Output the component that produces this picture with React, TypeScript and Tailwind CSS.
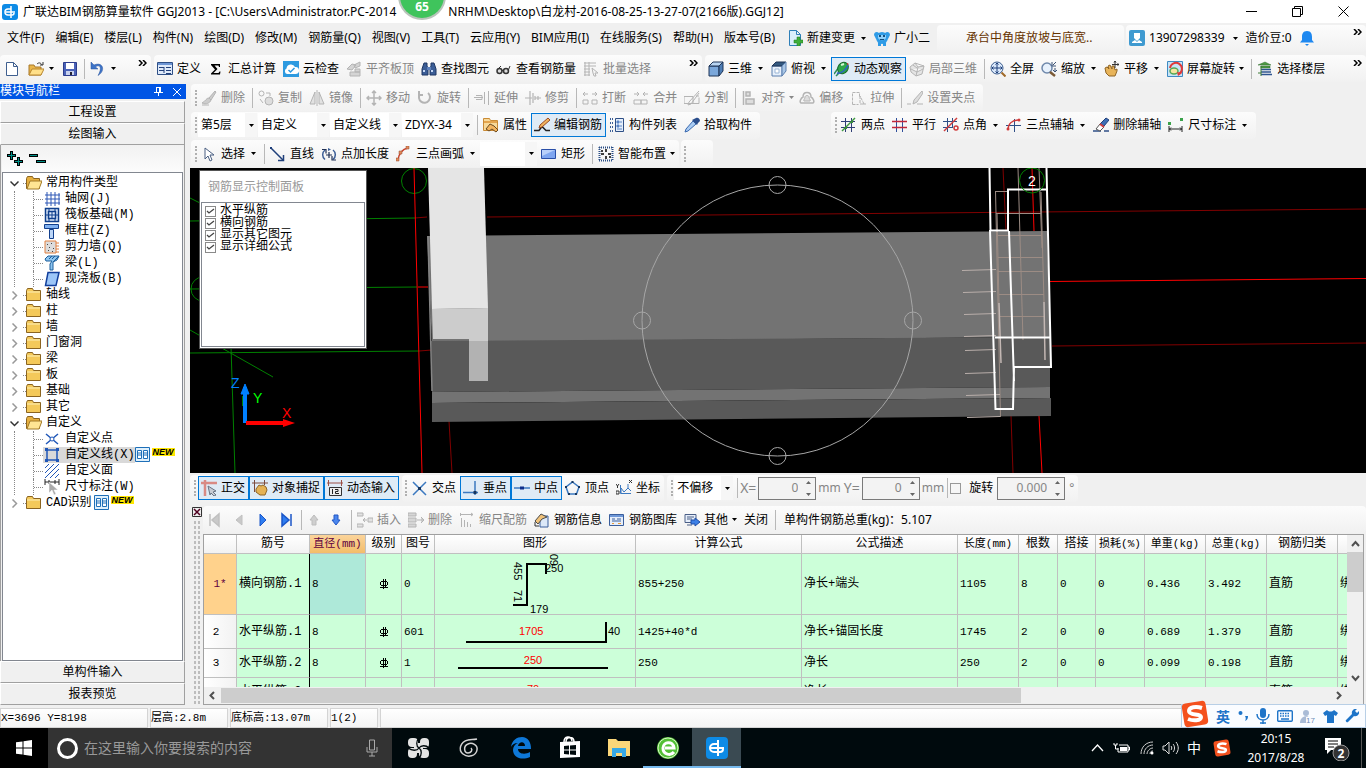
import { useState } from "react";
import type { ReactNode } from "react";

/* ICONS */

const GRAY = "#b4b4b4";

const icons: Record<string, ReactNode> = {
  newFile: <path d="M2.500 1.500h7l4 4v9h-11z M9.500 1.500v4h4" fill="#fff" stroke="#3f5f8f" />,
  open: (
    <>
      <path d="M1 4h5l1 2h6v8H1z" fill="#e9b64a" stroke="#a8782a" />
      <path d="M1 14l3-6h12l-3 6z" fill="#ffe08a" stroke="#b8862f" />
      <path d="M9 3c2-2 4-1 5 1m1-3v3h-3" fill="none" stroke="#333" />
    </>
  ),
  save: (
    <>
      <path d="M1.500 1.500h13v13h-13z" fill="#4a62b8" stroke="#2d3c8c" />
      <path d="M4 2h8v6H4z" fill="#fff" />
      <path d="M4 10h8v4H4z" fill="#c9d2ee" />
      <path d="M8 11h2v3H8z" fill="#223" />
    </>
  ),
  undo: <path d="M1 1v7h7L5.500 6C9 3 13 6 8 14.500 16 10 13 0 4 4z" fill="#3e74c8" stroke="#2a549c" strokeWidth=".5" />,
  define: (
    <>
      <path d="M.500 1.500h15v12H.500z" fill="#dfeafa" stroke="#2e4f86" />
      <path d="M1 2h14v2H1z" fill="#6d95d4" />
      <path d="M2 6.500h5m-5 3h5m2-3h5m-5 3h5m-5 3h5M7 6v6" stroke="#22407a" />
    </>
  ),
  sigma: <path d="M3 3h9v3h-1l-.500-1.500H6.500L9.500 8l-4 4h5l1-1.500h1l-.500 3H3v-1L7 8.500 3 4z" fill="#000" />,
  cloud: (
    <>
      <path d="M0 0h16v16H0z" fill="#2d9ae0" />
      <path d="M4 13a3 3 0 0 1-.500-5.500A4.500 4.500 0 0 1 12 6a3.500 3.500 0 0 1 1 7z" fill="#fff" />
      <path d="M5.500 9l2 2 4-4" fill="none" stroke="#2d9ae0" strokeWidth="1.500" />
    </>
  ),
  slabTop: <path d="M1 8l5-5 4 1-4 5zM8 4l6-3v4l-5 2zM4 11h10v4H4zM9 8h5v3H9z" fill="#d4d4d4" stroke={GRAY} />,
  find: (
    <>
      <path d="M3 2h3v3l1 2v7H1V8zM10 2h3l2 6v6H9V7l1-2z" fill="#3b5d96" stroke="#1e3762" />
      <path d="M6 6h4v3H6z" fill="#5f82bd" />
      <path d="M2 10h2m6 0h2" stroke="#c6d8f5" strokeWidth="2" />
    </>
  ),
  glasses: (
    <>
      <circle cx="3.500" cy="10" r="2.500" fill="#ddd" stroke="#333" strokeWidth="1.500" />
      <circle cx="10" cy="10" r="2.500" fill="#ddd" stroke="#333" strokeWidth="1.500" />
      <path d="M6 9.500h2M2 8l3-3m7 5l2-5" stroke="#333" fill="none" />
    </>
  ),
  batch: (
    <path d="M1 2h12M1 5h12M1 8h6M1 11h6M1 14h6M2 1v14M6 1v14M9 7l6 5h-3l1 3-2 0-1-3z" fill="none" stroke={GRAY} />
  ),
  cube: (
    <>
      <path d="M1 5h10v10H1z" fill="#7aa7da" stroke="#1f3556" />
      <path d="M1 5l4-4h10l-4 4z" fill="#b9d5f2" stroke="#1f3556" />
      <path d="M11 5l4-4v9l-4 5z" fill="#4d7db5" stroke="#1f3556" />
    </>
  ),
  topView: (
    <>
      <path d="M1 5h10v10H1z" fill="#e7f0fb" stroke="#5b7fae" />
      <path d="M1 5l4-4h10l-4 4z" fill="#33587f" stroke="#1f3556" />
      <path d="M11 5l4-4v9l-4 5z" fill="#a9c6e6" stroke="#5b7fae" />
      <path d="M4 8h4v4H4z" fill="#fff" stroke="#9ab5d6" />
    </>
  ),
  orbit: (
    <>
      <path d="M0 13l5-7M2 15l12-12" stroke="#2c8c5c" strokeWidth="1.500" />
      <ellipse cx="9" cy="7" rx="5" ry="6" transform="rotate(35 9 7)" fill="#2fa84b" stroke="#18692c" />
      <path d="M3 12c4 1 9-3 11-8" fill="none" stroke="#2c62c4" strokeWidth="1.500" />
      <path d="M7 4l3-1" stroke="#d6f6d6" strokeWidth="2" />
      <path d="M13 2l2 1-2 1z" fill="#e03030" />
    </>
  ),
  partial3d: <path d="M1 6l5-4 9 3-2 8-6 2-5-4zM6 2l3 4 6-1M9 6l-2 9M2 8l6 3 6-3M4 4l4 3" fill="#e4e4e4" stroke={GRAY} />,
  fullscreen: (
    <>
      <circle cx="7" cy="7" r="6" fill="#dbe9fb" stroke="#3a5b8c" />
      <path d="M7 2v10M2 7h10M5.500 3.500L7 2l1.500 1.500M5.500 10.500L7 12l1.500-1.500M3.500 5.500L2 7l1.500 1.500M10.500 5.500L12 7l-1.500 1.500" fill="none" stroke="#1d3f7a" />
      <path d="M11.500 11.500l4 4" stroke="#a06a2a" strokeWidth="2" />
    </>
  ),
  zoom: (
    <>
      <circle cx="6" cy="7" r="5" fill="#e7f1fc" stroke="#6f88ab" strokeWidth="1.500" />
      <path d="M9 11l5 4" stroke="#7b5a36" strokeWidth="2.500" />
      <path d="M11 1v4h4M12 4l3-3M14 7v4M12 9l2 2 2-2" fill="none" stroke="#3c5375" />
    </>
  ),
  pan: (
    <>
      <path d="M1 7l2-1 2 2-1-3 2-1 2 4V5l2 0 1 4 2-1 0 2-2 5H5L2 12z" fill="#e8b45a" stroke="#8f6526" />
      <path d="M11 0v7M8 3.500h7M10 1.500L11 0l1 1.500M13.500 2.500l1.500 1-1.500 1" fill="none" stroke="#333" />
    </>
  ),
  rotateScreen: (
    <>
      <path d="M.500.500h15v15H.500z" fill="#c6e4f7" stroke="#3f8ac2" />
      <path d="M3 7a6 6 0 1 1 9 6" fill="none" stroke="#e03a3a" strokeWidth="2" />
      <ellipse cx="7" cy="10" rx="4" ry="3" fill="#f6e6a0" stroke="#57a857" strokeWidth="1.500" />
      <path d="M10 11l5 1-4 3z" fill="#e03a3a" />
    </>
  ),
  floors: (
    <>
      <path d="M1 4l7-3 6 3zM4 5h9v2H4z" fill="#4f9a45" stroke="#2f6a2a" strokeWidth=".5" />
      <path d="M4 8.500h10M4 11h10M4 13.500h11" stroke="#2f5591" strokeWidth="1.500" />
      <path d="M4 5v10M1 12h3" stroke="#3e7d39" />
    </>
  ),
  brush: <path d="M14 1L8 8l2 2 5-8zM8 8c-3 0-3 3-7 5 4 2 8 0 9-3zM1 15h7" fill="#ccc" stroke={GRAY} />,
  copy: (
    <>
      <circle cx="3.500" cy="3.500" r="2.500" fill="none" stroke={GRAY} />
      <circle cx="11" cy="11" r="4" fill="#ddd" stroke={GRAY} />
      <path d="M8 3h4v3M2 9l3 4" fill="none" stroke={GRAY} />
    </>
  ),
  mirror: <path d="M6 2v12H1zM10 2v12h5zM8 0v16" fill="#e2e2e2" stroke={GRAY} />,
  move: <path d="M8 1v14M1 8h14M6 3l2-2 2 2M6 13l2 2 2-2M3 6L1 8l2 2M13 6l2 2-2 2" fill="none" stroke={GRAY} strokeWidth="1.500" />,
  rotate: <path d="M3 4a5.500 5.500 0 1 0 8-1M2 1v4h4" fill="none" stroke={GRAY} strokeWidth="2" />,
  extend: <path d="M0 7.500h9M2 5.500h6v4H2M10.500 2v12M14.500 1v14" fill="none" stroke={GRAY} />,
  trim: <path d="M0 8h7M5 1v14M8 3v10M10 8h6M10 6v4M13 6v4" fill="none" stroke={GRAY} strokeWidth="1.200" />,
  breakUp: <path d="M1 4h5M3 2L1 4l2 2M10 4h5M13 2l2 2-2 2M1 10h5v4H1zM10 10h5v4h-5z" fill="none" stroke={GRAY} />,
  merge: <path d="M1 4h5M4 2l2 2-2 2M10 4h5M12 2l-2 2 2 2M1 10h7v4H1zM8 10h6v4H8z" fill="none" stroke={GRAY} />,
  split: <path d="M0 6.500h9v7H0zM9 13.500h6v-6M15 1L5 12l-1 3 3-1 8-11M12 6h3" fill="none" stroke={GRAY} />,
  align: <path d="M2.500 1v14M5 2h4v4H5zM5 9h8v5H5z" fill="#ddd" stroke={GRAY} strokeWidth="1.500" />,
  offset: (
    <>
      <path d="M2 13c-2-1 0-5 2-6 0-6 8-6 8 0 2 1 4 5 2 6z" fill="none" stroke={GRAY} strokeWidth="1.500" />
      <path d="M5 11c-1-1 1-2 1-4s4-2 4 0 2 3 1 4z" fill="#ddd" stroke={GRAY} />
    </>
  ),
  stretch: <path d="M2.500 14.500v-12h7v4M2.500 14.500h6M10 6v8h4l-4-8M13 14h3" fill="none" stroke={GRAY} strokeDasharray="3 1" />,
  setGrip: <path d="M0 14h4m6 0h6M15 1L7 10l-1 4 4-2 6-9z" fill="#ddd" stroke={GRAY} />,
  props: (
    <>
      <path d="M.500 1.500h6l1 2h7v10H.500z" fill="#f7d99a" stroke="#c98a35" />
      <path d="M1 4h13v2H1z" fill="#e3a44e" />
      <path d="M3 12l4-5 4 2 4 4-2 2-4-3-3 2z" fill="#f3b45e" stroke="#6c4a1e" />
    </>
  ),
  editBar: (
    <>
      <path d="M0 13.500h5l3-4 4 4h4" fill="none" stroke="#222" strokeWidth="1.500" />
      <path d="M14 1l2 2-8 7-3 1 1-3z" fill="#f0b35e" stroke="#9b4a22" />
    </>
  ),
  list: (
    <>
      <path d="M1 2h4M1 6h3M1 10h3M1 14h4" stroke="#3c5f98" strokeDasharray="1 1" strokeWidth="2" />
      <path d="M6.500 1.500h8v13h-8z" fill="#e3edfa" stroke="#2e4f86" />
      <path d="M8 4h2v2H8zm0 4h2v2H8zM11 5h2m-2 4h2m-5 3h5" stroke="#5b84c4" fill="#5b84c4" />
    </>
  ),
  pick: (
    <>
      <path d="M9 4l3 3-8 7-3 1 1-3z" fill="#a9cbf2" stroke="#3b6ab0" />
      <path d="M8 3l5 5 1-2 2-2c0-2-2-4-4-3l-2 1z" fill="#2a4d8c" />
    </>
  ),
  twoPoint: (
    <>
      <path d="M0 4.500h14M0 10.500h14M4.500 1v14M10.500 1v14" stroke="#2f3f76" />
      <path d="M1 14L14 1" stroke="#3f9a3f" strokeWidth="1.500" />
      <path d="M3 10h3v2H3zM10 4h2v2h-2z" fill="#3a8a3a" />
    </>
  ),
  parallel: (
    <>
      <path d="M4.500 1v14M10.500 1v14" stroke="#2f4f9b" />
      <path d="M0 4.500h15M0 10.500h15" stroke="#c2273a" strokeWidth="1.500" />
    </>
  ),
  angle: (
    <>
      <path d="M0 4.500h14M0 10.500h10M4.500 1v14M9.500 1v10" stroke="#2f4f86" />
      <path d="M1 14L14 1" stroke="#d03a3a" strokeWidth="1.500" />
      <circle cx="13" cy="11" r="2" fill="none" stroke="#d03a3a" strokeWidth="1.500" />
    </>
  ),
  threeAxis: (
    <>
      <path d="M0 8.500h15M8.500 2v13" fill="none" stroke="#2f4f86" />
      <path d="M2 13C2 7 6 3 13 3" fill="none" stroke="#d03a3a" strokeWidth="1.500" />
      <circle cx="13" cy="3" r="1.500" fill="#d03a3a" />
      <circle cx="2" cy="12" r="1.500" fill="#d03a3a" />
    </>
  ),
  delAxis: (
    <>
      <path d="M0 14h8m3 0h5" stroke="#2f4f86" strokeWidth="1.500" />
      <path d="M13 1l3 2-5 6-4-2z" fill="#3f6fb5" stroke="#22407a" />
      <path d="M7 7l4 3-4 4-4-2z" fill="#fff" stroke="#555" />
      <path d="M7 7l4 3" stroke="#d04040" strokeWidth="2" />
    </>
  ),
  dim: (
    <>
      <path d="M1 12h13M1 9v6M14 9v6M3 10.500L1.500 12 3 13.500M12 10.500l1.500 1.500-1.500 1.500" fill="none" stroke="#222" />
      <path d="M0 5h3v3H0zM12 1h3v3h-3z" fill="#3aa24a" />
    </>
  ),
  cursor: <path d="M4 2v11l3-3 2 5 2-1-2-5h4z" fill="#fff" stroke="#4a5f82" />,
  line: (
    <>
      <path d="M1 2l12 12" stroke="#1f3f7a" strokeWidth="1.500" />
      <path d="M13.500 9v5.500H8" fill="none" stroke="#1f3f7a" strokeWidth="1.500" />
      <path d="M0 1h2v2H0z" fill="#1f3f7a" />
    </>
  ),
  pointLen: (
    <>
      <path d="M4 13.500A6 6 0 0 1 4 4M12 4a6 6 0 0 1 0 9.500" fill="none" stroke="#3b5d96" strokeWidth="1.500" />
      <path d="M8 6v6M5 9h6M1 3.500h4v4M15 14H11v-4" fill="none" stroke="#1e2f55" strokeWidth="1.200" />
      <path d="M7 2l3 1.500L7 5z" fill="#3b5d96" />
    </>
  ),
  arc: (
    <>
      <path d="M2 14C3 7 7 3 12 2" fill="none" stroke="#c8412c" strokeWidth="1.500" />
      <path d="M0 12h3v3H0zM3 5h3v3H3zM10 0h3v3h-3z" fill="#e58a5a" stroke="#8c4a30" strokeWidth=".5" />
    </>
  ),
  rect: (
    <>
      <path d="M.500 3.500h14v9H.500z" fill="#7fa6f0" stroke="#2a4fa8" />
      <path d="M1 4h13L1 10z" fill="#b9d0fa" />
    </>
  ),
  smart: (
    <>
      <path d="M1 1.500h14M1 14.500h14M1.500 1v14M14.500 1v14" fill="none" stroke="#2b4f86" strokeWidth="2" strokeDasharray="1 1" />
      <path d="M8 3v3M8 10v3M3 8h3M10 8h3M4 4v2M12 10v2" stroke="#000" strokeWidth="1.500" />
    </>
  ),
  ortho: (
    <>
      <path d="M0 3h16M4 0v16" stroke="#d98a84" strokeWidth="2.500" />
      <path d="M7 6l8 5-3 1 3 3-2 1-3-3-1 2z" fill="#c8ccd4" stroke="#6a7484" />
    </>
  ),
  snap: (
    <>
      <path d="M0 3h16M2.500 0v12M12.500 0v5" stroke="#7c4b3c" />
      <path d="M4 9l3-4 2 1 2-1 3 2 1 3-2 5H8l-4-3z" fill="#e5b254" stroke="#8f6526" />
    </>
  ),
  dynInput: (
    <>
      <path d="M0 3h16M1.500 0v6M14.500 0v6" stroke="#9c5148" />
      <path d="M2.500 7.500h12v8h-12z" fill="#eee" stroke="#333" />
      <path d="M5.500 9v5M8 9.500h3v2H8.500v2H12" fill="none" stroke="#222" />
    </>
  ),
  cross: (
    <>
      <path d="M1 2l13 13M14 2L1 15" stroke="#3c79c0" strokeWidth="1.500" />
      <path d="M6 7h3v3H6z" fill="#16365f" />
    </>
  ),
  perp: (
    <>
      <path d="M0 12.500h15M12 1v14" stroke="#3c79c0" strokeWidth="1.500" />
      <path d="M10.500 11h3v3h-3z" fill="#16365f" />
    </>
  ),
  middle: (
    <>
      <path d="M0 8h16" stroke="#3c79c0" strokeWidth="1.500" />
      <path d="M6 6.500h4v3H6z" fill="#0f2f8c" />
    </>
  ),
  vertex: (
    <>
      <path d="M7.500 2L14 7l-2.500 7h-8L1 7z" fill="none" stroke="#3c79c0" strokeWidth="1.500" />
      <path d="M6.500 1h2v2h-2zM0 6h2v2H0zM13 6h2v2h-2zM3 13h2v2H3zM10 13h2v2h-2z" fill="#16365f" />
    </>
  ),
  coord: (
    <>
      <path d="M4.500 5v8.500H15M5 13V8l3 4 4-4V4M12 8l3 3" fill="none" stroke="#3c79c0" />
      <path d="M0 4l1.500 2L3 4M1.500 6v2M13 0l3 3m0-3l-3 3M0 11h3v3H0z" fill="none" stroke="#333" />
    </>
  ),
  first: <path d="M3 2v12M12 2v12L5 8z" fill="#c9c9c9" stroke="#c0c0c0" strokeWidth="1.500" />,
  prev: <path d="M11 3v10L5 8z" fill="#c9c9c9" stroke="#c0c0c0" />,
  next: <path d="M5 2v12l6-6z" fill="#2f7df0" stroke="#1b56c8" />,
  last: <path d="M3 2v12l7-6zM12 2v12" fill="#2f7df0" stroke="#1b56c8" strokeWidth="1.500" />,
  up: <path d="M7 3l4 5H9v5H5V8H3z" fill="#cfcfcf" stroke="#bdbdbd" />,
  down: <path d="M7 13l4-5H9V3H5v5H3z" fill="#4a86ee" stroke="#2257c4" />,
  insertRow: <path d="M0 1h6v3H0zM0 12h6v3H0zM6 8h4M8 6L6 8l2 2M11 6h5v4h-5z" fill="#e2e2e2" stroke={GRAY} />,
  deleteRow: <path d="M0 1h8v3H0zM0 6h8v4H0zM0 12h8v3H0zM9 8h7M13 5l3 3-3 3" fill="#d6d6d6" stroke={GRAY} />,
  scaleBar: <path d="M1 2.500h13M1.500 1v3M12 1l2 1.500L12 4M2.500 6v9M5.500 8v7M8.500 10v5M11.500 12v3" fill="none" stroke={GRAY} />,
  barInfo: (
    <>
      <path d="M6 4h8v11H6z" fill="#dce8f8" stroke="#3a5e9c" />
      <path d="M1 9l6-7 6 3-5 2-4 5z" fill="#f0c27a" stroke="#4b4b4b" />
      <path d="M1 10v4h4" fill="none" stroke="#333" />
    </>
  ),
  barLib: (
    <>
      <path d="M.500 2.500h14v11H.500z" fill="#e6eefa" stroke="#3a5e9c" />
      <path d="M1 3h13v2H1z" fill="#6f98d8" />
      <path d="M3 7h3m2 0h4M3 9h9" stroke="#3a5e9c" />
      <path d="M3 11h2v1H3zM9 11h3v1H9z" fill="#e89a3a" />
    </>
  ),
  other: (
    <>
      <path d="M1 2.500h11v8H1z" fill="#e6eefa" stroke="#4a5e86" />
      <path d="M3 5h7M3 7h5M3 13h5" stroke="#4a5e86" />
      <path d="M7 8h4V6l5 4-5 4v-2H7z" fill="#3c7fe6" stroke="#1e4fa8" />
    </>
  ),
  newChange: (
    <>
      <path d="M2.500.500h7l4 4v11h-11zM9.500.500v4h4" fill="#d9eefb" stroke="#2e7fb8" />
      <path d="M10 7h3v3h3v3h-3v3h-3v-3H7v-3h3z" fill="#3fae3a" stroke="#1f7a1f" strokeWidth=".5" />
    </>
  ),
  robot: (
    <>
      <circle cx="8" cy="8" r="6" fill="#2f9be6" />
      <path d="M0 5c0-3 3-4 5-2h6c2-2 5-1 5 2l-2 4H2zM4 13h3v3H4zM9 13h3v3H9z" fill="#2f9be6" />
      <path d="M4 5h8v3c-2 3-6 3-8 0z" fill="#8fd0fa" />
      <path d="M5 5h2v2H5zM9 5h2v2H9zM6 9h4v1H6z" fill="#14507f" />
    </>
  ),
  user: (
    <>
      <rect width="16" height="16" rx="2" fill="#3f9ad0" />
      <path d="M5 3h6v5l-3 3-3-3zM3 12l3-2 2 2 2-2 3 2v1H3z" fill="#fff" />
    </>
  ),
  grid: <path d="M3 1v14M7 1v14M11 1v14M1 4h12M1 8h12M1 12h12M14 3h2v2h-2zM14 7h2v2h-2zM14 11h2v2h-2z" fill="none" stroke="#2c57b5" />,
  raft: (
    <>
      <path d="M1.500 1.500h13v13h-13zM4.500 4.500h7v7h-7z" fill="#dce8fa" stroke="#0f3f8c" strokeWidth="1.500" />
      <path d="M8 5v6M5 8h6M5 1v3M11 1v3M5 12v3M11 12v3M1 8h3M12 8h3" stroke="#0f3f8c" />
    </>
  ),
  column: (
    <>
      <path d="M.500 1.500h14v4h-14z" fill="#7fb0f0" stroke="#123f8c" />
      <path d="M5.500 6.500h4v9h-4z" fill="#bcd6f8" stroke="#123f8c" />
    </>
  ),
  wall: (
    <>
      <path d="M1 2h11v12H1z" fill="#dcdcdc" stroke="#e08040" />
      <path d="M3 5h1v1H3zM7 4h1v1H7zM5 8h1v1H5zM9 9h1v1H9zM4 11h1v1H4zM8 12h1v1H8z" fill="#444" />
      <path d="M12 4h3M12 7h3M12 10h3M12 13h3" stroke="#e08040" />
    </>
  ),
  beam: (
    <>
      <path d="M1 4l3-3h11l-2 4-4 2v8H6V9l2-3H2z" fill="#8ec5f0" stroke="#1c5f9c" />
      <path d="M9 7l6-6M8 4l3-3M5 4l3-3" fill="none" stroke="#1c5f9c" />
    </>
  ),
  slab: <path d="M4 1.500h11l-3 13H1.500z" fill="#9cc6f8" stroke="#123f9c" strokeWidth="1.500" />,
  customPoint: (
    <>
      <path d="M2 3l12 10M14 3L2 13" stroke="#2057b8" strokeWidth="1.500" />
      <circle cx="8" cy="8" r="2" fill="#fff" stroke="#2057b8" />
    </>
  ),
  customLine: (
    <>
      <path d="M3 3h10v10H3z" fill="none" stroke="#2057b8" strokeWidth="1.500" />
      <path d="M1 1h3v3H1zM12 1h3v3h-3zM1 12h3v3H1zM12 12h3v3h-3z" fill="#2057b8" />
    </>
  ),
  customFace: <path d="M1 5l4-4M1 10l9-9M1 15L15 1M6 15l9-9M11 15l4-4" stroke="#2057b8" />,
  dimMark: (
    <>
      <path d="M1 3h14M1 0v6M15 0v6M5 1v4M11 1v4" stroke="#222" />
      <path d="M5 3v11l3-3 2 5 2-1-2-4h4z" fill="#aaa" stroke="#fff" strokeWidth=".5" />
    </>
  ),
  folder: (
    <>
      <path d="M.500 3.500l1-2h5l1 2h7v10h-14z" fill="#f4c95a" stroke="#8b6420" />
      <path d="M1 5h13" stroke="#fdf0b8" />
    </>
  ),
  folderOpen: (
    <>
      <path d="M.500 3.500l1-2h5l1 2h6v10h-13z" fill="#e6b040" stroke="#8b6420" />
      <path d="M1 14l3-8h12l-3 8z" fill="#ffe593" stroke="#a27a28" />
    </>
  ),
  book: (
    <>
      <path d="M.500.500h14v14H.500z" fill="#dff0fc" stroke="#1e6fb8" />
      <path d="M2.500 3.500h4v8h-4zM8.500 3.500h4v8h-4z" fill="#fff" stroke="#1e6fb8" />
      <path d="M3 6h3M3 8h3M9 6h3M9 8h3" stroke="#1e6fb8" />
    </>
  ),
};

function Icon({ name, size = 16 }: { name: string; size?: number }) {
  return (
    <svg width={size} height={size} viewBox="0 0 16 16" className="shrink-0" aria-hidden="true">
      {icons[name]}
    </svg>
  );
}

/* TOOLBAR PARTS */

function Caret({ muted }: { muted?: boolean }) {
  return (
    <svg width="5" height="3" viewBox="0 0 5 3" className="shrink-0" aria-hidden="true">
      <path d="M0 0h5L2.500 3z" fill={muted ? "#888" : "#000"} />
    </svg>
  );
}

type ToolProps = {
  icon?: string;
  label?: string;
  title?: string;
  active?: boolean;
  disabled?: boolean;
  drop?: boolean;
};

function Tool({ icon, label, title, active, disabled, drop }: ToolProps) {
  return (
    <>
      <button
        type="button"
        aria-label={label ?? title}
        disabled={disabled}
        className={`flex h-6 shrink-0 items-center gap-1 border pl-[2px] whitespace-nowrap ${label ? "pr-[3px]" : "pr-[2px]"} ${
          active ? "border-[#0078d7] bg-[#dfebf6]" : "border-transparent"
        } ${disabled ? "text-[#868686]" : "text-black"}`}
      >
        {icon && <Icon name={icon} />}
        {label && <span>{label}</span>}
      </button>
      {drop && (
        <span className="flex w-3 shrink-0 pl-[2px]">
          <Caret muted={disabled} />
        </span>
      )}
    </>
  );
}

function Sep() {
  return <span className="mr-[2px] ml-[3px] h-5 w-px shrink-0 bg-[#b8b8b8]" />;
}

function Grip() {
  return <span className="mr-px h-4 w-[2px] shrink-0 border-l-2 border-dotted border-[#b0b0b0]" />;
}

function Group({ children, className = "" }: { children: ReactNode; className?: string }) {
  return (
    <div className={`flex h-[27px] items-center rounded-sm bg-linear-to-b from-[#fcfcfc] to-[#f1f1f1] ${className}`}>
      {children}
    </div>
  );
}

function More() {
  return (
    <button type="button" aria-label="更多" className="mb-3 ml-auto flex shrink-0 px-1">
      <svg width="9" height="6" viewBox="0 0 9 6">
        <path d="M1 0l3 3-3 3M5 0l3 3-3 3" fill="none" stroke="#000" strokeWidth="1.500" />
      </svg>
    </button>
  );
}

function Combo({ label, value, width }: { label: string; value: string; width: string }) {
  return (
    <div className={`relative mr-px flex h-6 shrink-0 items-center bg-white ${width}`}>
      <select aria-label={label} defaultValue={value} className="h-6 w-full appearance-none bg-transparent pl-[3px] outline-none">
        <option>{value}</option>
      </select>
      <span className="pointer-events-none absolute inset-y-0 right-0 flex w-3 items-center justify-center bg-[#f6f6f6]">
        <Caret />
      </span>
    </div>
  );
}

function Spin({ label, value, width }: { label: string; value: string; width: string }) {
  return (
    <span className={`flex h-[23px] shrink-0 items-center border border-[#7a7a7a] bg-[#f3f3f3] ${width}`}>
      <input
        aria-label={label}
        defaultValue={value}
        className="w-full min-w-0 flex-1 bg-transparent pr-2 text-right text-[#868686] outline-none"
      />
      <svg width="5" height="15" viewBox="0 0 5 15" className="mr-1 shrink-0">
        <path d="M0 3h5L2.500 0zM0 12h5l-2.500 3z" fill="#666" />
      </svg>
    </span>
  );
}

/* TITLE AND MENUS */

const menus = [
  "文件(F)", "编辑(E)", "楼层(L)", "构件(N)", "绘图(D)", "修改(M)", "钢筋量(Q)",
  "视图(V)", "工具(T)", "云应用(Y)", "BIM应用(I)", "在线服务(S)", "帮助(H)", "版本号(B)",
];

function TitleBar() {
  return (
    <header className="flex h-[23px] items-center bg-white pl-[2px]">
      <svg width="16" height="16" viewBox="0 0 16 16" aria-hidden="true">
        <rect width="16" height="16" rx="3" fill="#0d8be6" />
        <path d="M9 2v12M9 5H6a3 3 0 0 0 0 6h4a2 2 0 0 0 2-2M4 8h9" fill="none" stroke="#fff" strokeWidth="1.500" />
      </svg>
      <h1 className="ml-[5px] flex items-center whitespace-nowrap">
        <span>广联达BIM钢筋算量软件 GGJ2013 - [C:\Users\Administrator.PC-2014</span>
        <svg width="48" height="23" viewBox="0 0 48 23" className="mx-[2px] shrink-0">
          <circle cx="24" cy="-4" r="24" fill="#b9c4bb" />
          <circle cx="24" cy="-4" r="22" fill="#3fc45c" />
          <text x="24" y="11" fontSize="12" fontWeight="700" fill="#fff" textAnchor="middle">65</text>
        </svg>
        <span>NRHM\Desktop\白龙村-2016-08-25-13-27-07(2166版).GGJ12]</span>
      </h1>
      <div className="ml-auto flex h-full items-center">
        <button type="button" aria-label="最小化" className="flex w-[46px] justify-center">
          <svg width="11" height="11"><path d="M0 5.500h11" stroke="#000" /></svg>
        </button>
        <button type="button" aria-label="还原" className="flex w-[46px] justify-center">
          <svg width="11" height="11"><path d="M.500 2.500h8v8h-8zM2.500 2.500v-2h8v8h-2" fill="none" stroke="#000" /></svg>
        </button>
        <button type="button" aria-label="关闭" className="flex w-[46px] justify-center">
          <svg width="11" height="11"><path d="M.500.500l10 10M10.500.500l-10 10" stroke="#000" /></svg>
        </button>
      </div>
    </header>
  );
}

function MenuBar() {
  return (
    <nav className="flex h-[30px] items-center pl-[2px]">
      <div className="flex shrink-0 gap-px pr-1">
        {menus.map((m) => (
          <button key={m} type="button" className="shrink-0 px-[5px] whitespace-nowrap">
            {m}
          </button>
        ))}
      </div>
      <Tool icon="newChange" label="新建变更" drop />
      <Tool icon="robot" label="广小二" />
      <Group className="ml-[3px] w-[187px] shrink-0 pl-[29px] text-[#663300]">承台中角度放坡与底宽..</Group>
      <Group className="ml-[2px] flex-1">
        <Tool icon="user" label="13907298339" />
        <span className="mr-2 ml-1"><Caret /></span>
        <span className="whitespace-nowrap">造价豆:0</span>
        <svg width="14" height="15" viewBox="0 0 14 15" className="ml-2 shrink-0">
          <path d="M7 0c4 0 5 3 5 6v3l2 2.500H0L2 9V6c0-3 1-6 5-6zM5 13h4l-2 2z" fill="#1e88f0" />
        </svg>
        <More />
      </Group>
    </nav>
  );
}

function MainToolbar() {
  return (
    <div className="flex h-[31px] items-center">
      <Group className="w-[151px] shrink-0 pl-px">
        <Tool icon="newFile" title="新建" />
        <span className="w-[2px]" />
        <Tool icon="open" title="打开" drop />
        <Tool icon="save" title="保存" />
        <Sep />
        <Tool icon="undo" title="撤销" drop />
        <More />
      </Group>
      <Group className="ml-[3px] w-[548px] shrink-0">
        <Tool icon="define" label="定义" />
        <Tool icon="sigma" label="汇总计算" />
        <Tool icon="cloud" label="云检查" />
        <Tool icon="slabTop" label="平齐板顶" disabled />
        <Tool icon="find" label="查找图元" />
        <Tool icon="glasses" label="查看钢筋量" />
        <Tool icon="batch" label="批量选择" disabled />
        <More />
      </Group>
      <Group className="ml-[3px] flex-1">
        <Tool icon="cube" label="三维" drop />
        <Tool icon="topView" label="俯视" drop />
        <Tool icon="orbit" label="动态观察" active />
        <Tool icon="partial3d" label="局部三维" disabled />
        <Sep />
        <Tool icon="fullscreen" label="全屏" />
        <Tool icon="zoom" label="缩放" drop />
        <Tool icon="pan" label="平移" drop />
        <Tool icon="rotateScreen" label="屏幕旋转" />
        <Caret />
        <span className="w-1" />
        <Sep />
        <Tool icon="floors" label="选择楼层" />
        <More />
      </Group>
    </div>
  );
}

/* LEFT NAVIGATION */

type Leaf = { icon: string; label: string; selected?: boolean; isNew?: boolean };
type Branch = { label: string; children?: Leaf[]; isNew?: boolean };

const tree: Branch[] = [
  {
    label: "常用构件类型",
    children: [
      { icon: "grid", label: "轴网(J)" },
      { icon: "raft", label: "筏板基础(M)" },
      { icon: "column", label: "框柱(Z)" },
      { icon: "wall", label: "剪力墙(Q)" },
      { icon: "beam", label: "梁(L)" },
      { icon: "slab", label: "现浇板(B)" },
    ],
  },
  { label: "轴线" },
  { label: "柱" },
  { label: "墙" },
  { label: "门窗洞" },
  { label: "梁" },
  { label: "板" },
  { label: "基础" },
  { label: "其它" },
  {
    label: "自定义",
    children: [
      { icon: "customPoint", label: "自定义点" },
      { icon: "customLine", label: "自定义线(X)", selected: true, isNew: true },
      { icon: "customFace", label: "自定义面" },
      { icon: "dimMark", label: "尺寸标注(W)" },
    ],
  },
  { label: "CAD识别", isNew: true },
];

function NewMark() {
  return (
    <>
      <Icon name="book" />
      <span className="mb-[6px] ml-px bg-[#ffe600] px-px font-['Liberation_Sans',sans-serif] text-[9px] leading-[8px] font-bold text-black italic">
        NEW
      </span>
    </>
  );
}

function TreeNode({ node }: { node: Branch }) {
  const [open, setOpen] = useState(Boolean(node.children));

  return (
    <li>
      <button type="button" onClick={() => setOpen(!open)} className="flex h-4 items-center whitespace-nowrap">
        <svg width="9" height="9" viewBox="0 0 9 9" className="ml-[7px]">
          <path d={open ? "M.500 2.500l4 4 4-4" : "M2.500.500l4 4-4 4"} fill="none" stroke={open ? "#333" : "#999"} strokeWidth="1.500" />
        </svg>
        <span className="ml-1 w-[3px] border-t border-dotted border-[#888]" />
        <Icon name={open ? "folderOpen" : "folder"} />
        <span className="mr-[2px] ml-1">{node.label}</span>
        {node.isNew && <NewMark />}
      </button>
      {open && node.children && (
        <ul className="ml-[11px] border-l border-dotted border-[#888] pl-[18px]">
          {node.children.map((leaf) => (
            <li key={leaf.label} className="flex h-4 items-center border-l border-dotted border-[#888]">
              <span className="w-[9px] shrink-0 border-t border-dotted border-[#888]" />
              <button
                type="button"
                className={`flex h-4 items-center gap-[5px] pl-px whitespace-nowrap ${leaf.selected ? "bg-[#d9d9d9]" : ""}`}
              >
                <Icon name={leaf.icon} />
                <span>{leaf.label}</span>
              </button>
              {leaf.isNew && <NewMark />}
            </li>
          ))}
        </ul>
      )}
    </li>
  );
}

function NavButton({ label }: { label: string }) {
  return (
    <button
      type="button"
      className="flex h-[22px] w-full items-center justify-center border border-t-white border-r-[#a0a0a0] border-b-[#a0a0a0] border-l-white bg-[#f0f0f0] pt-[2px]"
    >
      {label}
    </button>
  );
}

function Sidebar() {
  return (
    <aside className="flex w-[186px] shrink-0 flex-col font-['Liberation_Mono','Noto_Sans_CJK_SC',monospace]">
      <div className="flex h-[15px] items-center bg-[#0055e5] text-white">
        <h2>模块导航栏</h2>
        <button type="button" aria-label="固定" className="ml-auto">
          <svg width="9" height="9" viewBox="0 0 9 9">
            <path d="M2.500 0v5M6.500 0v5M2 .500h5M0 5.500h9M4.500 5v4M5.500 0v5" fill="none" stroke="#fff" />
          </svg>
        </button>
        <button type="button" aria-label="关闭导航栏" className="mr-[5px] ml-[10px]">
          <svg width="8" height="8" viewBox="0 0 8 8"><path d="M0 0l8 8M8 0L0 8" stroke="#fff" /></svg>
        </button>
      </div>
      <div className="mt-[2px] mr-px">
        <NavButton label="工程设置" />
        <NavButton label="绘图输入" />
      </div>
      <div className="mr-px flex flex-1 flex-col border-x border-[#a0a0a0] px-px">
        <div className="flex h-[27px] items-center gap-[6px] bg-linear-to-b from-[#f1f1f1] to-[#fcfcfc] pl-[5px]">
          <button type="button" aria-label="展开">
            <svg width="16" height="15" viewBox="0 0 16 15">
              <path d="M0 4.500h9M4.500 0v9M7 10.500h9M11.500 6v9" stroke="#000" strokeWidth="3" />
              <path d="M1 4.500h7M4.500 1v7M8 10.500h7M11.500 7v7" stroke="#009088" />
            </svg>
          </button>
          <button type="button" aria-label="折叠">
            <svg width="17" height="11" viewBox="0 0 17 11">
              <path d="M0 2.500h9M7 8.500h10" stroke="#000" strokeWidth="3" />
              <path d="M1 2.500h7M8 8.500h8" stroke="#009088" />
            </svg>
          </button>
        </div>
        <ul className="flex-1 border border-[#828790] bg-white pt-[2px]">
          {tree.map((n) => (
            <TreeNode key={n.label + (n.children ? "-open" : "")} node={n} />
          ))}
        </ul>
      </div>
      <div className="mr-px mb-[2px]">
        <NavButton label="单构件输入" />
        <NavButton label="报表预览" />
      </div>
    </aside>
  );
}

/* EDIT TOOLBARS */

function EditToolbars() {
  return (
    <>
      <div className="flex h-[27px] items-center pl-px">
        <Group className="pr-1 pl-1">
          <Grip />
          <Tool icon="brush" label="删除" disabled />
          <Sep />
          <Tool icon="copy" label="复制" disabled />
          <Tool icon="mirror" label="镜像" disabled />
          <Sep />
          <Tool icon="move" label="移动" disabled />
          <Tool icon="rotate" label="旋转" disabled />
          <Sep />
          <Tool icon="extend" label="延伸" disabled />
          <Tool icon="trim" label="修剪" disabled />
          <Sep />
          <Tool icon="breakUp" label="打断" disabled />
          <Tool icon="merge" label="合并" disabled />
          <Tool icon="split" label="分割" disabled />
          <Sep />
          <Tool icon="align" label="对齐" disabled />
          <Caret muted />
          <span className="w-[2px]" />
          <Tool icon="offset" label="偏移" disabled />
          <Tool icon="stretch" label="拉伸" disabled />
          <Sep />
          <Tool icon="setGrip" label="设置夹点" disabled />
        </Group>
      </div>
      <div className="flex h-7 items-center pl-px">
        <Group className="shrink-0 pr-1 pl-1">
          <Grip />
          <Combo label="楼层" value="第5层" width="w-[59px]" />
          <Combo label="构件类型" value="自定义" width="w-[71px]" />
          <Combo label="构件种类" value="自定义线" width="w-[71px]" />
          <Combo label="构件名称" value="ZDYX-34" width="w-[71px]" />
          <Sep />
          <Tool icon="props" label="属性" />
          <Tool icon="editBar" label="编辑钢筋" active />
          <Tool icon="list" label="构件列表" />
          <Tool icon="pick" label="拾取构件" />
        </Group>
        <Group className="ml-[71px] shrink-0 pr-1 pl-1">
          <Grip />
          <Tool icon="twoPoint" label="两点" />
          <Tool icon="parallel" label="平行" />
          <Tool icon="angle" label="点角" drop />
          <Tool icon="threeAxis" label="三点辅轴" drop />
          <Tool icon="delAxis" label="删除辅轴" />
          <Tool icon="dim" label="尺寸标注" drop />
        </Group>
      </div>
      <div className="flex h-[29px] items-center pl-px">
        <Group className="pr-1 pl-1">
          <Grip />
          <Tool icon="cursor" label="选择" drop />
          <Sep />
          <Tool icon="line" label="直线" />
          <Tool icon="pointLen" label="点加长度" />
          <Tool icon="arc" label="三点画弧" drop />
          <Combo label="画弧半径" value="" width="w-[57px]" />
          <Tool icon="rect" label="矩形" />
          <Sep />
          <Tool icon="smart" label="智能布置" />
          <Caret />
        </Group>
        <Group className="ml-[2px] w-8 pl-[3px]">
          <Grip />
        </Group>
      </div>
    </>
  );
}

/* 3D VIEW */

const rebarTicks = [
  [962, 270], [963, 292], [964, 314], [964, 336], [965, 350], [965, 373], [966, 395], [967, 417],
];

const displayOptions = ["水平纵筋", "横向钢筋", "显示其它图元", "显示详细公式"];

function Scene() {
  return (
    <svg viewBox="190 168 1176 305" preserveAspectRatio="xMidYMid slice" className="absolute inset-0 h-full w-full">
      <g fill="none" stroke="#008000">
        <path d="M190 198l10 5M190 221l225-3M190 289l227-2M190 353l229-2M190 330l83 47M231 347l4 126" />
        <circle cx="203" cy="289" r="12" />
        <circle cx="414" cy="181" r="12.500" />
      </g>
      <g fill="none" stroke="#800000">
        <path d="M415 218l12-1M487 217L1366 209M419 351l13-1M1052 346L1366 343M449 421l3 52M1003 168l3 62M1011 416l2 57" />
      </g>
      <path d="M414 168l8 305M418 287h10M1050 281.500L1366 278.500M1032 168l2 63M1039 416l3 57" fill="none" stroke="#f00" />

      {/* beam */}
      <path d="M427 236L1047 231l3 106L432 342z" fill="#737373" />
      <path d="M431 341L1050 337v50L432 392z" fill="#595959" />
      <path d="M432 392L1050 387v11L432 403z" fill="#737373" />
      <path d="M432 403L1051 398v18L432 422z" fill="#595959" />
      <path d="M428 168h56l4 140-56 1z" fill="#e5e5e5" />
      <path d="M432 309l56-1v34h-19v-3h-36z" fill="#ccc" />
      <path d="M469 341h19v40h-19z" fill="#b2b2b2" />
      <path d="M428 236l4 155" stroke="#858585" strokeWidth="1.500" />

      {/* orbit ring */}
      <g fill="none" stroke="#a6a6a6">
        <circle cx="777.500" cy="320.500" r="135.500" />
        <circle cx="777.500" cy="185" r="8.500" />
        <circle cx="777.500" cy="456" r="8.500" />
        <circle cx="642" cy="320.500" r="8.500" />
        <circle cx="913" cy="320.500" r="8.500" />
      </g>

      {/* rebar cage */}
      <g fill="none" stroke="#9c8c84">
        <path d="M995.500 191.500H1008M996 213.500h45M998 235.500h44M998 257.500h45M998 271.500h45M999 294.500h45M999 316.500h45" />
        <path d="M995.500 191l5 226M997 213l2 90M1018 168l5 172M1039 168l3 80M1041 192l3 110" />
        <path d="M999 303l2 60M1044 302l1 58" stroke="#c4b8b4" strokeWidth="1.500" />
        {rebarTicks.map(([x, y]) => (
          <path key={y} d={`M${x} ${y + 0.5}L${x > 965 ? 1000 : 996} ${y - 0.5}`} stroke="#b9aeaa" />
        ))}
      </g>
      <path
        d="M989.500 168l1 62.500h18M1008 231V189.500h38.500M1046.500 168l4.500 199h-37l-1 42h-17.500L990 230M1009 231l5 150M995 337.500h56"
        fill="none"
        stroke="#fff"
        strokeWidth="2"
      />

      <circle cx="1032" cy="180.500" r="12.500" fill="none" stroke="#008000" />
      <text x="1028" y="186" fill="#fff" fontSize="14" fontFamily="Liberation Sans">2</text>

      {/* axes */}
      <path d="M243 396v10" stroke="#0f0" />
      <path d="M245 423v-36" stroke="#0080ff" strokeWidth="4" />
      <path d="M241 394l4-10 4 10z" fill="#0080ff" stroke="#0080ff" />
      <path d="M246 423h38" stroke="#f00" strokeWidth="4" />
      <path d="M283 419l12 4-12 4z" fill="#f00" />
      <g fontSize="14" fontFamily="Liberation Sans">
        <text x="231" y="388" fill="#0080ff">Z</text>
        <text x="253" y="403" fill="#0f0">Y</text>
        <text x="282" y="418" fill="#f00">X</text>
      </g>
    </svg>
  );
}

function Viewport() {
  return (
    <section className="relative min-h-[305px] flex-1 overflow-hidden bg-black">
      <Scene />
      <div className="absolute top-[2px] left-[9px] flex h-[179px] w-[168px] flex-col border border-[#555] bg-white p-px">
        <h3 className="flex h-[30px] items-center pl-[7px] text-[#999]">钢筋显示控制面板</h3>
        <div className="flex-1 border border-[#828790] pt-[2px] pl-[3px] font-['Liberation_Mono','Noto_Sans_CJK_SC',monospace]">
          {displayOptions.map((o) => (
            <label key={o} className="flex h-3 items-center gap-1 leading-3">
              <input type="checkbox" defaultChecked className="peer sr-only" />
              <span className="flex h-[11px] w-[11px] items-center justify-center border border-[#8a8a8a] bg-white">
                <svg width="9" height="7" viewBox="0 0 9 7">
                  <path d="M1 3l2 2 5-4" fill="none" stroke="#444" strokeWidth="1.300" />
                </svg>
              </span>
              {o}
            </label>
          ))}
        </div>
      </div>
    </section>
  );
}

function SnapBar() {
  return (
    <div className="flex h-8 items-center pb-[2px]">
      <Group className="pl-1">
        <Grip />
        <span className="w-px" />
        <Tool icon="ortho" label="正交" active />
        <Tool icon="snap" label="对象捕捉" active />
        <Tool icon="dynInput" label="动态输入" active />
      </Group>
      <Group className="ml-[3px] pl-[3px]">
        <Grip />
        <span className="w-px" />
        <Tool icon="cross" label="交点" />
        <Tool icon="perp" label="垂点" active />
        <Tool icon="middle" label="中点" active />
        <Tool icon="vertex" label="顶点" />
        <Tool icon="coord" label="坐标" />
      </Group>
      <Group className="ml-[3px] pr-1 pl-1">
        <Grip />
        <Combo label="偏移方式" value="不偏移" width="w-[59px]" />
        <Sep />
        <span className="mr-[2px] text-sm text-[#868686]">X=</span>
        <Spin label="X" value="0" width="w-[58px]" />
        <span className="mr-[3px] ml-[2px] text-[#868686]">mm</span>
        <span className="mr-[2px] text-sm text-[#868686]">Y=</span>
        <Spin label="Y" value="0" width="w-[58px]" />
        <span className="ml-[2px] text-[#868686]">mm</span>
        <Sep />
        <label className="flex items-center gap-2 whitespace-nowrap">
          <input type="checkbox" className="h-[11px] w-[11px] appearance-none border border-[#999] bg-[#f6f6f6]" />
          旋转
        </label>
        <span className="w-1" />
        <Spin label="旋转角度" value="0.000" width="w-[68px]" />
        <span className="ml-1 text-[#868686]">°</span>
      </Group>
    </div>
  );
}

/* REBAR TABLE */

type Row = { no: string; name: string; shape: string; fig: string; formula: string; desc: string; nums: string[]; h: string };

const columns = [
  ["", "w-[33px]"], ["筋号", "w-[73px]"], ["直径(mm)", "w-[56px]"], ["级别", "w-[36px]"], ["图号", "w-[33px]"],
  ["图形", "w-[201px]"], ["计算公式", "w-[166px]"], ["公式描述", "w-[156px]"], ["长度(mm)", "w-[61px]"],
  ["根数", "w-[39px]"], ["搭接", "w-[38px]"], ["损耗(%)", "w-[49px]"], ["单重(kg)", "w-[61px]"],
  ["总重(kg)", "w-[61px]"], ["钢筋归类", "w-[71px]"], ["搭接形式", "w-[100px]"],
];

const rows: Row[] = [
  { no: "1*", name: "横向钢筋.1", shape: "hook", fig: "0", formula: "855+250", desc: "净长+端头", nums: ["1105", "8", "0", "0", "0.436", "3.492"], h: "h-[61px]" },
  { no: "2", name: "水平纵筋.1", shape: "bend", fig: "601", formula: "1425+40*d", desc: "净长+锚固长度", nums: ["1745", "2", "0", "0", "0.689", "1.379"], h: "h-[34px]" },
  { no: "3", name: "水平纵筋.2", shape: "line250", fig: "1", formula: "250", desc: "净长", nums: ["250", "2", "0", "0", "0.099", "0.198"], h: "h-[29px]" },
  { no: "4", name: "水平纵筋.3", shape: "line70", fig: "1", formula: "70", desc: "净长", nums: ["70", "2", "0", "0", "0.028", "0.055"], h: "h-[29px]" },
];

function Shape({ kind }: { kind: string }) {
  if (kind === "hook") {
    return (
      <svg width="200" height="60" viewBox="0 0 200 60" className="block" fontSize="11" fontFamily="Liberation Sans">
        <path d="M78 51h14V10h19v10" fill="none" stroke="#000" strokeWidth="2" />
        <text transform="translate(79 8) rotate(90)">455</text>
        <text transform="translate(79 36) rotate(90)">71</text>
        <text transform="translate(123 12) rotate(-90)">60</text>
        <text x="110" y="18">250</text>
        <text x="95" y="59">179</text>
      </svg>
    );
  }
  if (kind === "bend") {
    return (
      <svg width="200" height="33" viewBox="0 0 200 33" className="block" fontSize="11" fontFamily="Liberation Sans">
        <path d="M31 27h140V7" fill="none" stroke="#000" strokeWidth="2" />
        <text x="84" y="20" fill="#f00">1705</text>
        <text x="173" y="20">40</text>
      </svg>
    );
  }
  return (
    <svg width="200" height="28" viewBox="0 0 200 28" className="block" fontSize="11" fontFamily="Liberation Sans">
      <path d="M23 19h150" stroke="#000" strokeWidth="2" />
      <text x="98" y="15" fill="#f00" textAnchor="middle">{kind === "line250" ? "250" : "70"}</text>
    </svg>
  );
}

function LevelMark() {
  return (
    <svg width="10" height="10" viewBox="0 0 10 10" className="mx-auto" aria-label="三级钢">
      <path d="M4.500 0v10M6.500 0v8M2 2.500h6M2 6.500h6M1.500 3v3M8.500 3v3M1 8.500h8" fill="none" stroke="#000" />
    </svg>
  );
}

function RebarTable() {
  return (
    <table className="w-[1234px] table-fixed border-separate border-spacing-0 font-['Liberation_Mono','Noto_Sans_CJK_SC',monospace] leading-4">
      <thead>
        <tr>
          {columns.map(([name, w], i) => (
            <th
              key={name}
              className={`h-[19px] border-r border-b border-[#c0c0c0] p-0 text-center font-normal whitespace-nowrap ${w} ${
                i === 2 ? "bg-linear-to-b from-[#fbd49a] to-[#f3bd6a] text-[#600040]" : "bg-linear-to-b from-white to-[#f2f2f2]"
              } ${name.includes("(") ? "text-[11px]" : ""}`}
            >
              {name}
            </th>
          ))}
        </tr>
      </thead>
      <tbody className="bg-[#ccffd9]">
        {rows.map((r, i) => (
          <tr key={r.no} className={`${r.h} [&>td]:border-r [&>td]:border-b [&>td]:border-[#c0c0c0] [&>td]:p-0 [&>td]:pl-[2px] [&>td]:whitespace-nowrap`}>
            <th
              className={`border-r border-b border-[#c0c0c0] p-0 text-center text-[11px] font-normal ${
                i === 0 ? "bg-[#ffd28c] text-[#600040]" : "bg-linear-to-r from-white to-[#f2f2f2] pr-2"
              }`}
            >
              {r.no}
            </th>
            <td className="border-r-black!">{r.name}</td>
            <td className={`text-[11px] ${i === 0 ? "bg-[#aee9d9]" : ""}`}>8</td>
            <td className="pl-0!"><LevelMark /></td>
            <td className="text-[11px]">{r.fig}</td>
            <td className="overflow-hidden pl-0!"><Shape kind={r.shape} /></td>
            <td className="text-[11px]">{r.formula}</td>
            <td>{r.desc}</td>
            {r.nums.map((n, j) => (
              <td key={j} className="text-[11px]">{n}</td>
            ))}
            <td>直筋</td>
            <td>绑扎</td>
          </tr>
        ))}
      </tbody>
    </table>
  );
}

function RebarPanel() {
  return (
    <section className="flex pb-[2px]">
      <div className="flex w-[13px] shrink-0 flex-col items-center pt-[2px]">
        <button type="button" aria-label="关闭面板">
          <svg width="10" height="10" viewBox="0 0 10 10">
            <path d="M.500.500h9v9h-9z" fill="#eee" stroke="#333" />
            <path d="M2 2l6 6M8 2L2 8" stroke="#500020" strokeWidth="1.500" />
          </svg>
        </button>
        <div className="mt-[3px] w-2 flex-1 bg-[radial-gradient(#bdbdbd_1px,transparent_1px)] bg-[size:4px_5px]" />
      </div>
      <div className="min-w-0 flex-1">
        <div className="flex h-[29px] items-center">
          <Group className="w-full pl-px">
            <Tool icon="first" title="首行" disabled />
            <span className="w-[2px]" />
            <Tool icon="prev" title="上一行" disabled />
            <span className="w-[2px]" />
            <Tool icon="next" title="下一行" />
            <span className="w-[2px]" />
            <Tool icon="last" title="末行" />
            <Sep />
            <Tool icon="up" title="上移" disabled />
            <Tool icon="down" title="下移" />
            <Sep />
            <Tool icon="insertRow" label="插入" disabled />
            <Tool icon="deleteRow" label="删除" disabled />
            <Tool icon="scaleBar" label="缩尺配筋" disabled />
            <Tool icon="barInfo" label="钢筋信息" />
            <Tool icon="barLib" label="钢筋图库" />
            <Tool icon="other" label="其他" />
            <Caret />
            <span className="w-1" />
            <Tool label="关闭" />
            <Sep />
            <span className="ml-[6px] whitespace-nowrap">单构件钢筋总重(kg)：5.107</span>
          </Group>
        </div>
        <div className="mr-[2px] border border-[#a0a0a0] bg-white">
          <div className="flex">
            <div className="h-[152px] min-w-0 flex-1 overflow-hidden">
              <RebarTable />
            </div>
            <div className="flex w-4 shrink-0 flex-col items-center bg-[#f0f0f0]">
              <svg width="9" height="17" viewBox="0 0 9 17"><path d="M1 11l3.500-4L8 11" fill="none" stroke="#505050" strokeWidth="2" /></svg>
              <div className="h-10 w-full bg-[#cdcdcd]" />
              <svg width="9" height="17" viewBox="0 0 9 17" className="mt-auto"><path d="M1 6l3.500 4L8 6" fill="none" stroke="#505050" strokeWidth="2" /></svg>
            </div>
          </div>
          <div className="flex h-[17px] items-center bg-[#f0f0f0] pr-4">
            <svg width="17" height="15" viewBox="0 0 17 15" className="shrink-0"><path d="M10 4L6.500 7.500 10 11" fill="none" stroke="#505050" strokeWidth="2" /></svg>
            <div className="h-[15px] w-[70%] bg-[#cdcdcd]" />
            <svg width="17" height="15" viewBox="0 0 17 15" className="ml-auto shrink-0"><path d="M7 4l3.500 3.500L7 11" fill="none" stroke="#505050" strokeWidth="2" /></svg>
          </div>
        </div>
      </div>
    </section>
  );
}

/* STATUS BAR */

function StatusCell({ children, className }: { children?: ReactNode; className: string }) {
  return (
    <div className={`flex h-5 items-center border border-[#d4d4d4] bg-linear-to-b from-white to-[#f4f4f4] whitespace-nowrap ${className}`}>
      {children}
    </div>
  );
}

function SogouLogo({ size }: { size: number }) {
  return (
    <svg width={size} height={size} viewBox="0 0 28 28" className="shrink-0" aria-hidden="true">
      <rect x="2" y="2" width="24" height="24" rx="4" fill="#f4511e" transform="rotate(-9 14 14)" />
      <path d="M21 8c-6-2-13-1-13 3 0 5 12 2 12 6 0 4-8 4-13 2" fill="none" stroke="#fff" strokeWidth="4" />
    </svg>
  );
}

function ImeBar() {
  return (
    <div className="absolute right-0 bottom-0 flex h-6 w-[185px] items-center gap-[7px] border border-[#b8cfe6] bg-[#fafcff] pr-1 text-[#1e74c8]">
      <span className="-mt-1 -ml-px"><SogouLogo size={28} /></span>
      <b className="font-['Noto_Sans_CJK_SC',sans-serif] text-sm leading-5">英</b>
      <svg width="12" height="12" viewBox="0 0 12 12"><circle cx="3.500" cy="3" r="2" fill="currentColor" /><path d="M8 6h3c0 3-1 4-3 5 1-2 1-3 0-5z" fill="currentColor" /></svg>
      <svg width="14" height="16" viewBox="0 0 14 16"><rect x="4" y="0" width="6" height="10" rx="3" fill="currentColor" /><path d="M1 6c0 8 12 8 12 0M7 12v4M4 15h6" fill="none" stroke="currentColor" strokeWidth="1.500" /></svg>
      <svg width="16" height="12" viewBox="0 0 16 12"><rect x=".7" y=".7" width="14.600" height="10.600" rx="1" fill="none" stroke="currentColor" strokeWidth="1.400" /><path d="M3 3.500h10M3 6h10" stroke="currentColor" strokeWidth="1.500" strokeDasharray="1.500 1" /><path d="M4 9h8" stroke="currentColor" strokeWidth="1.500" /></svg>
      <svg width="16" height="15" viewBox="0 0 16 15"><circle cx="6" cy="4" r="3" fill="#a9bbd6" /><path d="M0 14c0-9 12-9 12 0z" fill="#a9bbd6" /><path d="M6 8h10v7H6z" fill="#fafcff" /><text x="6" y="14" fontSize="8" fill="#6f8db8" fontFamily="Liberation Sans">17</text></svg>
      <svg width="15" height="13" viewBox="0 0 15 13"><path d="M4 0c2 2 5 2 7 0l4 3-2 3-2-1v8H4V5L2 6 0 3z" fill="currentColor" /></svg>
      <svg width="14" height="14" viewBox="0 0 14 14"><path d="M1 11l6-6c-1-3 2-6 5-5L10 2l2 2 2-2c1 3-2 6-5 5l-6 6c-1 1-3-1-2-2z" fill="currentColor" /></svg>
    </div>
  );
}

function StatusBar() {
  return (
    <footer className="relative flex h-[21px] items-center gap-[2px] font-['Liberation_Mono','Noto_Sans_CJK_SC',monospace] text-[11px]">
      <StatusCell className="w-[148px]">X=3696 Y=8198</StatusCell>
      <StatusCell className="w-[78px]">层高:2.8m</StatusCell>
      <StatusCell className="w-[98px]">底标高:13.07m</StatusCell>
      <StatusCell className="w-[48px]">1(2)</StatusCell>
      <StatusCell className="flex-1" />
      <ImeBar />
    </footer>
  );
}

/* TASKBAR */

function TaskButton({ name, children, className = "" }: { name: string; children: ReactNode; className?: string }) {
  return (
    <button type="button" aria-label={name} className={`flex h-10 w-[49px] items-center justify-center border-b-2 pt-[2px] ${className || "border-transparent"}`}>
      <svg width="24" height="24" viewBox="0 0 24 24">{children}</svg>
    </button>
  );
}

function Taskbar() {
  return (
    <div className="flex h-10 items-center bg-[#000a0d] text-white">
      <button type="button" aria-label="开始" className="flex h-10 w-12 shrink-0 items-center justify-center bg-black">
        <svg width="16" height="16" viewBox="0 0 16 16"><path d="M0 2.300L6.500 1.400v6.100H0zM7.500 1.200L16 0v7.500H7.500zM0 8.500h6.500v6.100L0 13.700zM7.500 8.500H16V16l-8.500-1.200z" fill="#fff" /></svg>
      </button>
      <label className="flex h-10 w-[344px] shrink-0 items-center bg-[#333] pl-[9px]">
        <span className="h-[21px] w-[21px] rounded-full border-[3px] border-white" />
        <input placeholder="在这里输入你要搜索的内容" aria-label="搜索" className="ml-[6px] min-w-0 flex-1 bg-transparent text-sm outline-none placeholder:text-[#999]" />
        <svg width="12" height="18" viewBox="0 0 12 18" className="mr-[14px]"><path d="M3.500 1h5v10h-5zM1 8v5h10V8M6 13v4M3 17h6" fill="none" stroke="#aaa" /></svg>
      </label>
      <div className="ml-[2px] flex">
        <TaskButton name="应用">
          <g fill="#e4e4e4">
            <rect x="1" y="2" width="10" height="9" rx="4" />
            <rect x="13" y="2" width="9" height="10" rx="4" />
            <rect x="12" y="13" width="10" height="9" rx="4" />
            <rect x="1" y="12" width="9" height="10" rx="4" />
            <rect x="7" y="7" width="9" height="10" />
          </g>
          <path d="M12 12c-3-2-3-7 0-10M12 12c2-3 7-3 10 0M12 12c3 2 3 7 0 10M12 12c-2 3-7 3-11 0" fill="none" stroke="#000a0d" strokeWidth="1.300" />
        </TaskButton>
        <TaskButton name="浏览器">
          <path d="M21 3c-4 1-6 0-9 1-8 2-10 10-5 14s13 2 14-4c1-5-5-8-9-6-5 2-4 9 0 9 3 0 5-3 3-5" fill="none" stroke="#d4d4d4" strokeWidth="1.500" />
        </TaskButton>
        <TaskButton name="Edge" className="ml-1 border-transparent">
          <path d="M2 11C3 4 8 1 13 1c6 0 9 5 9 12H9c0 5 7 6 12 3v5C12 25 4 21 4 14c0-3 2-6 5-7-4 0-6 2-7 4zM9 10h7c0-5-6-5-7 0z" fill="#0e78d8" />
        </TaskButton>
        <TaskButton name="应用商店">
          <path d="M2 6l20-1v16l-20 1z" fill="#fff" />
          <path d="M8 6c0-6 8-6 8 0M6 6c0-6 7-7 8-1" fill="none" stroke="#fff" strokeWidth="1.500" />
          <path d="M6 10l5-.500v4H6zM12 9.400l6-.400v4.500h-6zM6 14.500h5v4L6 18zM12 14.500h6V19l-6-.400z" fill="#000a0d" />
        </TaskButton>
        <TaskButton name="文件资源管理器">
          <path d="M1 3h8l2 2h12v15H1z" fill="#fbd779" />
          <path d="M5 21v-9h14v9h-4v-4H9v4z" fill="#36a8e6" />
        </TaskButton>
        <TaskButton name="360浏览器" className="border-[#76b9ed]">
          <circle cx="12" cy="12" r="11" fill="#52c035" />
          <circle cx="12" cy="12" r="10" fill="none" stroke="#d8f5c8" />
          <path d="M18 16c-3 4-11 3-11-4 0-6 10-8 11 0H9" fill="none" stroke="#fff" strokeWidth="3" />
        </TaskButton>
        <TaskButton name="广联达" className="border-[#76b9ed] bg-[#3a4a52]">
          <rect x="1" y="1" width="22" height="22" rx="4" fill="#0d8be6" />
          <path d="M13 4v16M13 8H9a4 4 0 0 0 0 8h6a3 3 0 0 0 3-3M6 12h13" fill="none" stroke="#fff" strokeWidth="2" />
        </TaskButton>
      </div>
      <div className="ml-auto flex items-center">
        <svg width="13" height="8" viewBox="0 0 13 8"><path d="M1 7l5.500-6L12 7" fill="none" stroke="#fff" strokeWidth="1.300" /></svg>
        <svg width="17" height="12" viewBox="0 0 17 12" className="ml-[9px]"><path d="M6 3h9v7H5V6M15 5h1.500v3H15M1 1v2h3V1M2.500 3v4h3" fill="none" stroke="#fff" /><path d="M7 5h7v4H7z" fill="#fff" /></svg>
        <svg width="14" height="14" viewBox="0 0 14 14" className="ml-[10px]"><path d="M1 13C1 6 6 1 13 1M4 13c0-5 4-9 9-9M7 13c0-3 3-6 6-6M10 13c0-2 1-3 3-3" fill="none" stroke="#ccc" /><circle cx="12" cy="12" r="1.500" fill="#fff" /></svg>
        <svg width="17" height="14" viewBox="0 0 17 14" className="ml-2"><path d="M1 5h2l4-4v12L3 9H1zM9 5c1 1 1 3 0 4M11 3c2 2 2 6 0 8M14 1c3 4 3 8 0 12" fill="none" stroke="#ddd" /></svg>
        <span className="ml-2 text-sm">中</span>
        <span className="ml-3"><SogouLogo size={18} /></span>
        <time className="ml-[14px] flex w-[62px] flex-col text-center leading-[19px]">
          <span>20:15</span>
          <span>2017/8/28</span>
        </time>
        <button type="button" aria-label="通知" className="ml-[17px]">
          <svg width="26" height="26" viewBox="0 0 26 26">
            <path d="M1 3h16v12H7l-4 4v-4H1z" fill="#fff" />
            <path d="M4 6h10M4 9h10M4 12h6" stroke="#000" />
            <circle cx="17" cy="18" r="8" fill="#333" stroke="#999" />
            <text x="17" y="22.500" fontSize="12" fontFamily="Noto Sans" fontWeight="700" fill="#fff" textAnchor="middle">2</text>
          </svg>
        </button>
        <span className="mr-1 ml-[11px] h-10 w-px bg-[#555]" />
      </div>
    </div>
  );
}

export default function App() {
  return (
    <div className="flex min-h-screen flex-col overflow-hidden bg-[#f0f0f0] font-['Noto_Sans','Noto_Sans_CJK_SC',sans-serif] text-xs leading-4 text-black">
      <TitleBar />
      <MenuBar />
      <MainToolbar />
      <main className="flex flex-1">
        <Sidebar />
        <div className="ml-1 flex min-w-0 flex-1 flex-col">
          <EditToolbars />
          <Viewport />
          <SnapBar />
          <RebarPanel />
        </div>
      </main>
      <StatusBar />
      <Taskbar />
    </div>
  );
}
